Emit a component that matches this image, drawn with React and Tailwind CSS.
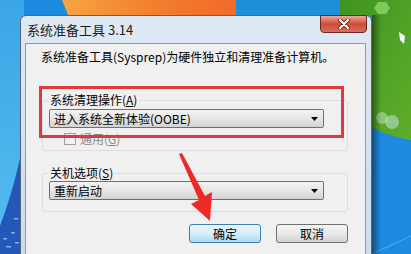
import React from "react";

function Desktop() {
  return (
    <svg className="absolute inset-0" width="411" height="254" viewBox="0 0 411 254">
      <defs>
        <linearGradient id="leftSky" x1="0" y1="0" x2="0" y2="1">
          <stop offset="0" stopColor="#3ba6e6" />
          <stop offset="1" stopColor="#54bdf0" />
        </linearGradient>
        <linearGradient id="orange" x1="0" y1="0" x2="1" y2="0">
          <stop offset="0" stopColor="#f7a544" />
          <stop offset="0.5" stopColor="#f2802e" />
          <stop offset="1" stopColor="#f26a28" />
        </linearGradient>
        <linearGradient id="green" x1="0" y1="0" x2="1" y2="1">
          <stop offset="0" stopColor="#3f9420" />
          <stop offset="1" stopColor="#5eae2a" />
        </linearGradient>
        <linearGradient id="shadow" x1="0" y1="0" x2="1" y2="0">
          <stop offset="0" stopColor="#000" stopOpacity="0.45" />
          <stop offset="1" stopColor="#000" stopOpacity="0" />
        </linearGradient>
      </defs>
      <rect width="411" height="254" fill="#1d8ae0" />
      <rect x="0" y="0" width="24" height="254" fill="url(#leftSky)" />
      <path d="M0 226 C8 205 14 185 22 150 L22 254 L0 254 Z" fill="#2258b8" />
      <g fill="#9cc7ee" opacity="0.8">
        <rect x="3" y="238" width="4" height="1.5" />
        <rect x="11" y="232" width="4" height="1.5" />
        <rect x="6" y="246" width="5" height="1.5" />
        <rect x="14" y="218" width="4" height="1.5" />
        <rect x="15" y="242" width="4" height="1.5" />
      </g>
      <path d="M62 0 L236 0 L236 15 L68 15 C66 10 64 5 62 0 Z" fill="url(#orange)" />
      <rect x="236" y="0" width="120" height="15" fill="#1f8fdc" />
      <path d="M340 0 L411 0 L411 140 C400 138 385 134 372 128 L372 15 L340 15 Z" fill="url(#green)" />
      <polygon points="378,2 386,2 390,8 386,14 378,14 374,8" fill="#8ed46a" opacity="0.8" />
      <circle cx="392" cy="122" r="7" fill="#cfe6f5" opacity="0.5" />
      <circle cx="382" cy="118" r="6" fill="#d8ecd0" opacity="0.45" />
      <path d="M399 32 L405 36 L404 44 L400 40 Z" fill="#f4fbff" />
      <path d="M372 254 L411 236" stroke="#7cc4f5" strokeWidth="1" opacity="0.6" />
      <rect x="372" y="15" width="9" height="239" fill="url(#shadow)" />
    </svg>
  );
}

function Dropdown({ label }) {
  return (
    <div className="flex h-[19px] w-[275px] items-center justify-between rounded-[2px] border border-[#707070] bg-gradient-to-b from-[#f3f3f3] via-[#e6e6e6] to-[#d3d3d3] pl-[4px] pr-[5px]">
      <span className="leading-[16px]">{label}</span>
      <svg width="7" height="4" viewBox="0 0 7 4">
        <polygon points="0,0 7,0 3.5,4" fill="#000" />
      </svg>
    </div>
  );
}

function Button({ children, focused }) {
  return (
    <div
      className={`flex h-[19px] w-[72px] items-center justify-center rounded-[3px] border leading-[16px] ${
        focused
          ? "border-[#3c7fb1] bg-gradient-to-b from-[#eaf6fd] via-[#d6eefb] to-[#a9daf5]"
          : "border-[#707070] bg-gradient-to-b from-[#f4f4f4] via-[#e8e8e8] to-[#d2d2d2]"
      }`}
    >
      {children}
    </div>
  );
}

function GroupBox({ title, children, className }) {
  return (
    <div className={`ml-[16px] w-[306px] rounded-[3px] border border-[#d5dfe5] ${className}`}>
      <div className="-mt-[9px] ml-[5px] w-fit bg-[#f0f0f0] px-[2px] leading-[16px]">{title}</div>
      {children}
    </div>
  );
}

export default function App() {
  return (
    <div className="relative h-[254px] w-[411px] overflow-hidden font-['Noto_Sans_CJK_SC',sans-serif] text-[12px] text-black">
      <Desktop />

      <div className="relative ml-[20px] mt-[15px] h-[260px] w-[352px] rounded-t-[6px] border border-[#55667c] bg-gradient-to-b from-[#dfe9f4] to-[#cbdaea]">
        <div className="flex h-[27px] items-start justify-between">
          <span className="pl-[6px] pt-[5px] text-[13px] leading-[18px] text-[#1a1a1a]">系统准备工具 3.14</span>
          <div className="-mt-[1px] mr-[4px] flex h-[18px] w-[47px] items-center justify-center rounded-b-[4px] border border-[#6b2a22] bg-gradient-to-b from-[#e8a898] via-[#cd4b36] to-[#d8705c]">
            <svg width="12" height="10" viewBox="0 0 12 10">
              <path d="M2 1 L10 9 M10 1 L2 9" stroke="#5a1a12" strokeWidth="3.6" strokeLinecap="round" />
              <path d="M2 1 L10 9 M10 1 L2 9" stroke="#fff" strokeWidth="2" strokeLinecap="round" />
            </svg>
          </div>
        </div>

        <div className="ml-[4px] h-[220px] w-[341px] border border-[#8d9bab] bg-[#f0f0f0]">
          <p className="pl-[15px] pt-[5px] leading-[16px]">系统准备工具(Sysprep)为硬件独立和清理准备计算机。</p>

          <GroupBox
            className="mt-[35px] h-[51px]"
            title={
              <>
                系统清理操作(<u>A</u>)
              </>
            }
          >
            <div className="ml-[6px] mt-[1px]">
              <Dropdown label="进入系统全新体验(OOBE)" />
            </div>
            <div className="ml-[21px] mt-[5px] flex items-center gap-[4px]">
              <span className="h-[12px] w-[12px] border border-[#a0a0a0] bg-gradient-to-br from-[#e6e6e6] to-[#f8f8f8]" />
              <span className="leading-[12px] text-[#8a8a8a]">
                通用(<u>G</u>)
              </span>
            </div>
          </GroupBox>

          <GroupBox
            className="mt-[22px] h-[39px]"
            title={
              <>
                关机选项(<u>S</u>)
              </>
            }
          >
            <div className="ml-[6px] mt-[0px]">
              <Dropdown label="重新启动" />
            </div>
          </GroupBox>

          <div className="mr-[17px] mt-[12px] flex justify-end gap-[15px]">
            <Button focused>确定</Button>
            <Button>取消</Button>
          </div>
        </div>
      </div>

      <div className="absolute left-[39px] top-[86px] h-[52px] w-[305px] border-[3px] border-[#e0383d]" />

      <svg className="absolute left-0 top-0" width="411" height="254" viewBox="0 0 411 254">
        <polygon
          points="179,154 182,153 205,196 212,192 210,221 191,204 199,200"
          fill="#ee2a26"
        />
      </svg>
    </div>
  );
}
